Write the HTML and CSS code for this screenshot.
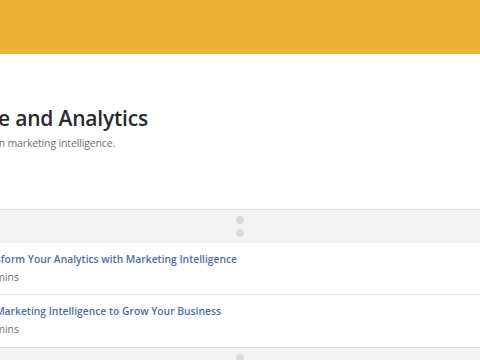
FILE: index.html
```html
<!DOCTYPE html>
<html>
<head>
<meta charset="utf-8">
<link rel="stylesheet" href="styles.css">
</head>
<body>
<div class="page">
  <header class="banner"></header>
  <section class="hero">
    <h1 class="title"><span>Marketing Intelligence and Analytics</span></h1>
    <p class="subtitle"><span>Learn about the latest trends in marketing intelligence.</span></p>
  </section>
  <div class="divider"><span class="dot"></span><span class="dot"></span></div>
  <ul class="units">
    <li class="unit">
      <a class="unit-title t1"><span>Transform Your Analytics with Marketing Intelligence</span></a>
      <span class="unit-meta"><span>~15 mins</span></span>
    </li>
    <li class="unit">
      <a class="unit-title t2"><span>Use Marketing Intelligence to Grow Your Business</span></a>
      <span class="unit-meta"><span>~15 mins</span></span>
    </li>
  </ul>
  <div class="divider"><span class="dot"></span><span class="dot"></span></div>
</div>
</body>
</html>
```
FILE: styles.css
```css
html, body {
  margin: 0;
  padding: 0;
  background: #fff;
  overflow: hidden;
  width: 480px;
  height: 360px;
}
body {
  font-family: "Open Sans", "Noto Sans", sans-serif;
  color: #222;
}
.page {
  display: flex;
  flex-direction: column;
}
.banner {
  height: 54px;
  background: #edb232;
}
.hero {
  padding: 50px 0 56px 0;
  height: 49px;
  overflow: hidden;
}
.title, .subtitle, .unit-title, .unit-meta {
  display: flex;
  justify-content: flex-end;
  white-space: nowrap;
}
.title span, .subtitle span, .unit-title span, .unit-meta span {
  flex: none;
}
.title {
  width: 148px;
  margin: 0;
  font-size: 21px;
  letter-spacing: -0.2px;
  line-height: 28px;
  font-weight: 600;
  color: #2a2a2a;
}
.subtitle {
  width: 115px;
  margin: 3px 0 0 0;
  font-size: 10.5px;
  letter-spacing: -0.15px;
  line-height: 16px;
  color: #6f6f6f;
}
.divider {
  height: 33px;
  border-top: 1px solid #dddddd;
  background: #f3f3f3;
  display: flex;
  flex-direction: column;
  align-items: center;
  justify-content: center;
  gap: 5px;
}
.dot {
  width: 8px;
  height: 8px;
  border-radius: 50%;
  background: #d9d9d9;
}
.units {
  list-style: none;
  margin: 0;
  padding: 0;
}
.unit {
  display: flex;
  flex-direction: column;
  height: 52px;
  padding-top: 8px;
  box-sizing: border-box;
}
.unit:first-child {
  border-bottom: 1px solid #e4e4e4;
}
.unit-title {
  font-size: 10.3px;
  line-height: 16px;
  font-weight: 600;
  color: #4b6ea8;
}
.t1 { width: 237px; }
.t2 { width: 221px; }
.unit-meta {
  width: 19px;
  margin-top: 2px;
  font-size: 10.5px;
  line-height: 16px;
  color: #6f6f6f;
}
```
